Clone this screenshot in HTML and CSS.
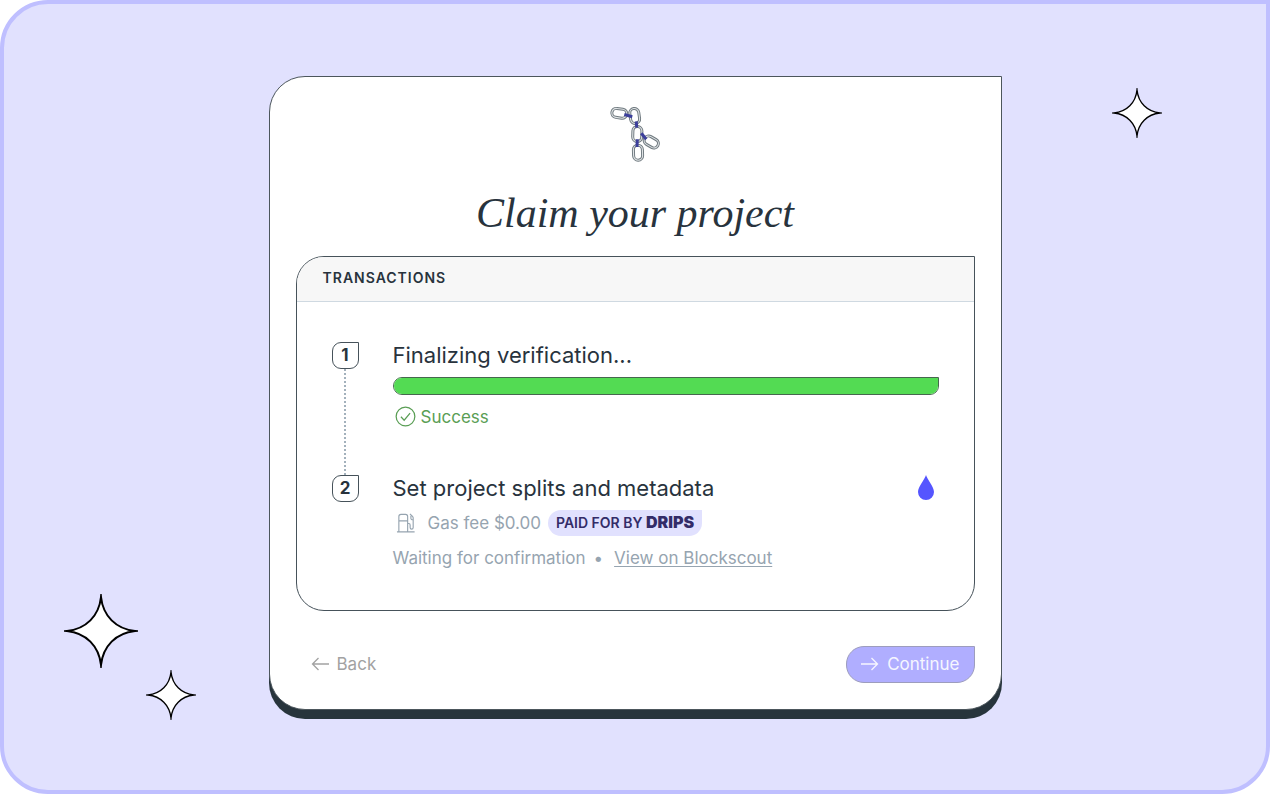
FILE: index.html
```html
<!DOCTYPE html>
<html lang="en">
<head>
<meta charset="utf-8">
<meta name="viewport" content="width=device-width, initial-scale=1">
<title>Claim your project</title>
<link rel="stylesheet" href="styles.css">
</head>
<body>
<svg class="defs" width="0" height="0" aria-hidden="true">
  <symbol id="star" viewBox="0 0 74 74">
    <path d="M37 3C39 22 52 35 71 37C52 39 39 52 37 71C35 52 22 39 3 37C22 35 35 22 37 3Z" stroke-miterlimit="20"/>
  </symbol>
  <symbol id="link" viewBox="-12 -8 24 16" overflow="visible">
    <rect x="-7.5" y="-4.5" width="15" height="9" rx="4.5" fill="none" stroke="#6f797f" stroke-width="3"/>
    <rect x="-7.5" y="-4.5" width="15" height="9" rx="4.5" fill="none" stroke="#dfe3e5" stroke-width="1.1"/>
  </symbol>
</svg>
<main class="stage">
  <svg class="star star-right" aria-hidden="true"><use href="#star"/></svg>
  <svg class="star star-large" aria-hidden="true"><use href="#star"/></svg>
  <svg class="star star-left" aria-hidden="true"><use href="#star"/></svg>

  <section class="card">
    <svg class="chain" viewBox="0 0 60 60" aria-hidden="true">
      <g transform="translate(14.3 9.3) rotate(8)"><use href="#link" x="-12" y="-8" width="24" height="16"/></g>
      <g transform="translate(29.7 12) rotate(82)"><use href="#link" x="-12" y="-8" width="24" height="16"/></g>
      <g transform="translate(32.3 30) rotate(92)"><use href="#link" x="-12" y="-8" width="24" height="16"/></g>
      <g transform="translate(33 48.7) rotate(88)"><use href="#link" x="-12" y="-8" width="24" height="16"/></g>
      <g transform="translate(46.3 38) rotate(30)"><use href="#link" x="-12" y="-8" width="24" height="16"/></g>
      <path d="M19.3 10.5L27.3 12.7M31.3 17.3L31.7 23.6M32.3 35.3L32 43M36.3 29.3L41.2 35.3" fill="none" stroke="#3c3f9b" stroke-width="3"/>
    </svg>
    <h1 class="title">Claim your project</h1>

    <div class="panel">
      <h2 class="panel-head">Transactions</h2>
      <ol class="steps">
        <li class="step">
          <div class="rail"><span class="num">1</span><span class="dots"></span></div>
          <div class="body">
            <h3 class="name">Finalizing verification...</h3>
            <progress class="bar" value="100" max="100" aria-label="Finalizing verification"></progress>
            <p class="success">
              <svg class="tick" viewBox="0 0 22 22" aria-hidden="true"><circle cx="11" cy="11" r="9.8"/><path d="M6.2 11.3L9.6 14.9L15.8 7.4"/></svg>
              Success
            </p>
          </div>
        </li>
        <li class="step">
          <div class="rail"><span class="num">2</span></div>
          <div class="body">
            <h3 class="name">Set project splits and metadata</h3>
            <p class="gas">
              <svg class="pump" viewBox="0 0 22 22" aria-hidden="true"><path d="M1 20.3H19.5M3 20V4.2Q3 2 5.2 2H10Q12.2 2 12.2 4.2V20M3 8.7H12.2M12.2 11.5H13.4Q14.8 11.5 14.8 13V15.6Q14.8 17.4 16.4 17.4Q18 17.4 18 15.6V5.8Q18 4.8 17.3 4L14.6 1.4M15.6 3.4V6.2Q15.6 7.6 18 7.8"/></svg>
              <span>Gas fee $0.00</span>
              <span class="badge">PAID FOR BY <b class="brand">DRIPS</b></span>
            </p>
            <p class="wait"><span>Waiting for confirmation</span><span>•</span><a class="link" href="#">View on Blockscout</a></p>
          </div>
          <svg class="drop" viewBox="0 0 16 25" aria-hidden="true"><path d="M8 0C9.2 4.5 16 11.5 16 17A8 8 0 0 1 0 17C0 11.5 6.8 4.5 8 0Z"/></svg>
        </li>
      </ol>
    </div>

    <div class="actions">
      <button class="btn back" type="button">
        <svg class="arrow" viewBox="0 0 18 14" aria-hidden="true"><path d="M18 7H1.5M7.5 1L1.5 7L7.5 13"/></svg>Back
      </button>
      <button class="btn next" type="button">
        <svg class="arrow" viewBox="0 0 18 14" aria-hidden="true"><path d="M0 7H16.5M10.5 1L16.5 7L10.5 13"/></svg>Continue
      </button>
    </div>
  </section>
</main>
</body>
</html>
```
FILE: styles.css
```css
* { box-sizing: border-box; }
body {
  margin: 0;
  background: #fff;
  color: #28333d;
  font-family: Inter, "Liberation Sans", sans-serif;
}
h1, h2, h3, p, ol { margin: 0; padding: 0; font-weight: 400; }
.defs { position: absolute; }

.stage {
  position: relative;
  min-height: 100vh;
  display: flex;
  align-items: center;
  justify-content: center;
  padding: 24px 24px 33px;
  border: 4px solid #bfbfff;
  border-radius: 48px 0 48px 48px;
  background: #e1e1fe;
}

.star {
  position: absolute;
  width: 50px;
  height: 50px;
  fill: #fff;
  stroke: #000;
  stroke-width: 2;
}
.star-right { right: 104px; top: 84px; }
.star-large { left: 60px; bottom: 122px; width: 74px; height: 74px; }
.star-left { left: 142px; bottom: 70px; }

.card {
  width: 100%;
  max-width: 733px;
  padding: 27px 26px 26px;
  border: 1px solid #4c565c;
  border-radius: 36px 0 36px 36px;
  background: #fff;
  box-shadow: 0 9px 0 #27343c;
}
.chain { display: block; width: 60px; height: 60px; margin: 0 auto; }
.title {
  margin: 24px 0 18px;
  font: italic 400 42px/50px "Liberation Serif", serif;
  text-align: center;
}

.panel {
  overflow: hidden;
  border: 1px solid #46525a;
  border-radius: 28px 0 28px 28px;
}
.panel-head {
  padding: 11px 26px 13px;
  border-bottom: 1px solid #cfd9e1;
  background: #f7f7f7;
  font-size: 14px;
  line-height: 20px;
  font-weight: 600;
  letter-spacing: 1px;
  text-transform: uppercase;
}
.steps { padding: 40px 35px 39px; list-style: none; }
.step { display: flex; gap: 34px; }
.rail { display: flex; flex-direction: column; align-items: center; }
.num {
  width: 27px;
  height: 27px;
  border: 1px solid #46525a;
  border-radius: 9px 0 9px 9px;
  font-size: 17px;
  line-height: 25px;
  font-weight: 700;
  text-align: center;
}
.dots { flex: 1; border-left: 2px dotted #a3b1bc; }
.body { flex: 1; min-width: 0; }
.name { font-size: 22px; line-height: 26px; }
.bar {
  display: block;
  width: 100%;
  height: 18px;
  margin: 9px 0 11px;
  overflow: hidden;
  appearance: none;
  border: 1px solid #46674e;
  border-radius: 9px 0 9px 9px;
  background: #53db53;
}
.bar::-webkit-progress-bar { background: #53db53; }
.bar::-webkit-progress-value { background: #53db53; }
.success {
  display: flex;
  align-items: center;
  gap: 5px;
  padding: 0 0 47px 2px;
  color: #5a9e55;
  font-size: 17px;
  line-height: 22px;
}
.tick { width: 21px; height: 21px; fill: none; stroke: #5a9e55; stroke-width: 1.3; }
.gas, .wait {
  display: flex;
  align-items: center;
  color: #96a4b0;
  font-size: 17px;
}
.gas { margin-top: 9px; padding-left: 3px; line-height: 26px; }
.pump { width: 21px; height: 22px; margin-right: 11px; fill: none; stroke: #96a4b0; stroke-width: 1.2; }
.badge {
  height: 26px;
  margin-left: 7px;
  padding: 0 8px;
  border-radius: 13px 0 13px 13px;
  background: #e1e1fe;
  color: #332c68;
  font-size: 14px;
  font-weight: 600;
  white-space: nowrap;
}
.brand { font-size: 16px; line-height: 20px; font-weight: 900; }
.wait { gap: 8px; margin-top: 9px; line-height: 26px; }
.link { margin-left: 3px; color: inherit; text-underline-offset: 2px; }
.drop { width: 16px; height: 25px; margin-right: 5px; fill: #5555ff; }

.actions {
  display: flex;
  justify-content: space-between;
  margin-top: 35px;
}
.btn {
  display: flex;
  align-items: center;
  gap: 8px;
  height: 37px;
  padding: 0 14px;
  border: 1px solid transparent;
  background: none;
  color: #a2a2a2;
  font: 400 17px/22px Inter, "Liberation Sans", sans-serif;
}
.next {
  border-color: #9d9dbd;
  border-radius: 18px 0 18px 18px;
  background: #b0aeff;
  color: #f6f6ff;
}
.arrow { width: 18px; height: 14px; fill: none; stroke: currentColor; stroke-width: 1.3; }
```
